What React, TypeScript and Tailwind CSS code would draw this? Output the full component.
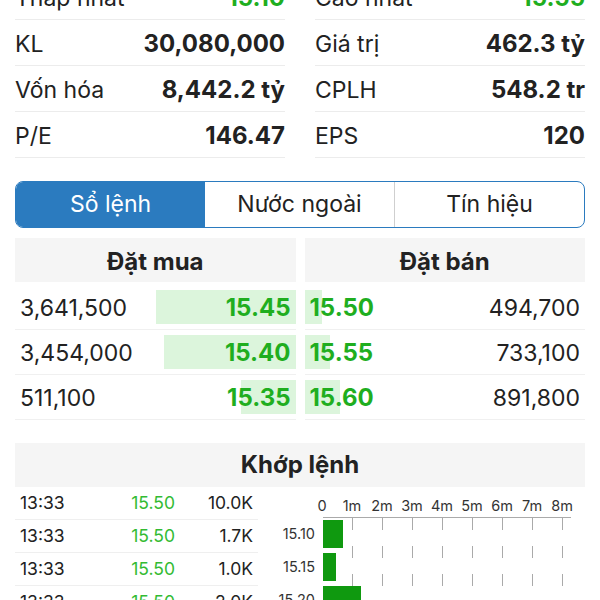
import React from 'react';

const stats: [string, string, string, string, boolean][] = [
    ['Thấp nhất', '15.10', 'Cao nhất', '15.55', true],
    ['KL', '30,080,000', 'Giá trị', '462.3 tỷ', false],
    ['Vốn hóa', '8,442.2 tỷ', 'CPLH', '548.2 tr', false],
    ['P/E', '146.47', 'EPS', '120', false],
];

const buys = [
    { vol: '3,641,500', price: '15.45', bar: 140 },
    { vol: '3,454,000', price: '15.40', bar: 132 },
    { vol: '511,100', price: '15.35', bar: 55 },
];

const sells = [
    { vol: '494,700', price: '15.50', bar: 17 },
    { vol: '733,100', price: '15.55', bar: 25 },
    { vol: '891,800', price: '15.60', bar: 35 },
];

const trades = [
    ['13:33', '15.50', '10.0K'],
    ['13:33', '15.50', '1.7K'],
    ['13:33', '15.50', '1.0K'],
    ['13:33', '15.50', '2.0K'],
];

const StatCell = ({ label, value, green }: { label: string; value: string; green: boolean }) => (
    <div className="h-[46px] flex items-center justify-between border-b border-[#ececec] pt-[3px]">
        <span className="text-[23px]">{label}</span>
        <span className={`text-[24px] font-bold ${green ? 'text-[#1fae1f]' : 'text-[#222]'}`}>{value}</span>
    </div>
);

const VolumeChart = () => {
    const bars = [
        { label: '15.10', w: 20 },
        { label: '15.15', w: 13 },
        { label: '15.20', w: 38 },
    ];
    const ticks = ['0', '1m', '2m', '3m', '4m', '5m', '6m', '7m', '8m'];
    return (
        <svg width="320" height="113" className="block">
            {ticks.map((t, i) => (
                <text key={t} x={57 + i * 30} y={24} textAnchor="middle" fontSize="14.5" fill="#333" fontFamily="Inter, sans-serif">
                    {t}
                </text>
            ))}
            <line x1={58} y1={30.5} x2={306} y2={30.5} stroke="#aaa" strokeWidth="1" />
            {ticks.slice(1).map((t, i) => (
                <line key={t} x1={87.5 + i * 30} y1={31} x2={87.5 + i * 30} y2={113} stroke="#aaa" strokeWidth="1" strokeDasharray="12 16" />
            ))}
            {bars.map((b, i) => (
                <g key={b.label}>
                    <rect x={58} y={33 + i * 33} width={b.w} height={28} fill="#0f990f" />
                    <text x={50} y={52 + i * 33} textAnchor="end" fontSize="14.5" fill="#333" fontFamily="Inter, sans-serif">
                        {b.label}
                    </text>
                </g>
            ))}
        </svg>
    );
};

export default function App() {
    return (
        <div className="w-[600px] h-[600px] overflow-hidden bg-white text-[#222] font-['Inter',sans-serif]">
            {/* Stats */}
            <div className="-mt-[26px] px-[15px] grid grid-cols-2 gap-x-[30px]">
                <div>
                    {stats.map(([l, v, , , g]) => (
                        <StatCell key={l} label={l} value={v} green={g} />
                    ))}
                </div>
                <div>
                    {stats.map(([, , l, v, g]) => (
                        <StatCell key={l} label={l} value={v} green={g} />
                    ))}
                </div>
            </div>

            {/* Tabs */}
            <div className="mx-[15px] mt-[23px] h-[47px] flex border border-[#2b7bbf] rounded-[8px] overflow-hidden">
                <div className="flex-1 flex items-center justify-center bg-[#2b7bbf] text-white text-[23px]">Sổ lệnh</div>
                <div className="flex-1 flex items-center justify-center text-[23px] border-r border-[#cfcfcf]">Nước ngoài</div>
                <div className="flex-1 flex items-center justify-center text-[23px]">Tín hiệu</div>
            </div>

            {/* Order book */}
            <div className="mx-[15px] mt-[10px] flex gap-[9px]">
                <div className="flex-1">
                    <div className="h-[44px] flex items-center justify-center bg-[#f5f5f5] text-[24px] font-bold pt-[3px]">Đặt mua</div>
                    <div className="mt-[3px]">
                        {buys.map((b) => (
                            <div key={b.price} className="h-[45px] flex items-center justify-between border-b border-[#f0f0f0] pl-[5px] pt-[2px] relative">
                                <span className="text-[23px]">{b.vol}</span>
                                <div className="absolute right-0 top-[5px] bottom-[5px] bg-[#dcf5dc]" style={{ width: b.bar }}></div>
                                <span className="relative text-[24px] font-bold text-[#1fae1f] pr-[5px]">{b.price}</span>
                            </div>
                        ))}
                    </div>
                </div>
                <div className="flex-1">
                    <div className="h-[44px] flex items-center justify-center bg-[#f5f5f5] text-[24px] font-bold pt-[3px]">Đặt bán</div>
                    <div className="mt-[3px]">
                        {sells.map((s) => (
                            <div key={s.price} className="h-[45px] flex items-center justify-between border-b border-[#f0f0f0] pr-[5px] pt-[2px] relative">
                                <div className="absolute left-0 top-[5px] bottom-[5px] bg-[#dcf5dc]" style={{ width: s.bar }}></div>
                                <span className="relative text-[24px] font-bold text-[#1fae1f] pl-[5px]">{s.price}</span>
                                <span className="text-[23px]">{s.vol}</span>
                            </div>
                        ))}
                    </div>
                </div>
            </div>

            {/* Matched orders */}
            <div className="mx-[15px] mt-[23px]">
                <div className="h-[44px] flex items-center justify-center bg-[#f5f5f5] text-[24px] font-bold">Khớp lệnh</div>
                <div className="flex">
                    <div className="w-[243px]">
                        {trades.map(([t, p, v], i) => (
                            <div key={i} className="h-[33px] flex items-center border-b border-[#efefef] text-[17.5px] pt-[1px]">
                                <span className="pl-[5px] w-[70px]">{t}</span>
                                <span className="w-[90px] text-right text-[#33bb33]">{p}</span>
                                <span className="flex-1 text-right pr-[5px]">{v}</span>
                            </div>
                        ))}
                    </div>
                    <div className="ml-[7px]">
                        <VolumeChart />
                    </div>
                </div>
            </div>
        </div>
    );
}
